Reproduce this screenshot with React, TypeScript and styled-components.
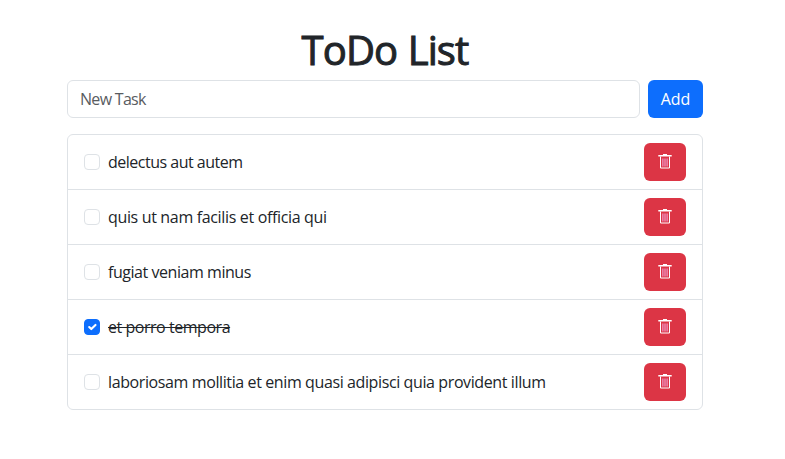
import React, { useState } from "react";
import styled, { createGlobalStyle } from "styled-components";

const GlobalStyle = createGlobalStyle`
  *, *::before, *::after { box-sizing: border-box; }
  body {
    margin: 0;
    background: #fff;
    color: #212529;
    font: 400 16px/1.5 "Segoe UI", "Open Sans", "Noto Sans", sans-serif;
  }
`;

const Container = styled.main`
  width: 636px;
  margin: 0 auto 0 67px;
  padding-top: 26px;
`;

const Title = styled.h1`
  margin: 0 0 6px;
  font-size: 40px;
  font-weight: 500;
  line-height: 48px;
  letter-spacing: -0.9px;
  word-spacing: 1px;
  -webkit-text-stroke: 1px currentColor;
  text-align: center;
  white-space: nowrap;
`;

const Form = styled.form`
  display: flex;
  gap: 8px;
  margin: 0 0 16px;
`;

const Input = styled.input`
  flex: 1;
  min-width: 0;
  height: 38px;
  padding: 6px 12px;
  border: 1px solid #dee2e6;
  border-radius: 6px;
  font: inherit;
  color: inherit;
  letter-spacing: -0.7px;
  &::placeholder { color: #595c5f; opacity: 1; }
`;

const Button = styled.button<{ $danger?: boolean }>`
  display: flex;
  align-items: center;
  justify-content: center;
  width: ${(p) => (p.$danger ? 42 : 55)}px;
  height: 38px;
  padding: 0;
  border: 0;
  border-radius: 6px;
  background: ${(p) => (p.$danger ? "#dc3545" : "#0d6efd")};
  color: #fff;
  font: inherit;
`;

const List = styled.ul`
  margin: 0;
  padding: 0;
  list-style: none;
  border: 1px solid #dee2e6;
  border-radius: 6px;
`;

const Item = styled.li`
  display: flex;
  align-items: center;
  height: 55px;
  padding: 0 16px;
  & + & { border-top: 1px solid #dee2e6; }
  &:first-child { height: 54px; }
`;

const Check = styled.input`
  appearance: none;
  flex: none;
  width: 16px;
  height: 16px;
  margin: 0 8px 0 0;
  border: 1px solid #dee2e6;
  border-radius: 4px;
  background: #fff center / contain no-repeat;
  &:checked {
    border-color: #0d6efd;
    background-color: #0d6efd;
    background-image: url("data:image/svg+xml,%3csvg xmlns='http://www.w3.org/2000/svg' viewBox='0 0 20 20'%3e%3cpath fill='none' stroke='%23fff' stroke-linecap='round' stroke-linejoin='round' stroke-width='3' d='m6 10 3 3 6-6'/%3e%3c/svg%3e");
  }
`;

const Label = styled.div<{ $done: boolean; $spacing: number }>`
  flex: 1;
  white-space: nowrap;
  letter-spacing: ${(p) => p.$spacing}px;
  text-decoration: ${(p) => (p.$done ? "line-through 1px" : "none")};
`;

const Trash = () => (
  <svg width="16" height="18" viewBox="0 0 16 18" fill="none" stroke="#fff">
    <path d="M6 1.5H10" />
    <path strokeWidth="1.5" d="M1.3 2.75H14.7" />
    <path d="M3.5 3.5V15H12.5V3.5" />
    <path stroke="#f4b0e6" d="M5.9 5.5V13.5M8 5.5V13.5M10.1 5.5V13.5" />
  </svg>
);

const initialTasks = [
  { text: "delectus aut autem", done: false, spacing: -0.5 },
  { text: "quis ut nam facilis et officia qui", done: false, spacing: -0.34 },
  { text: "fugiat veniam minus", done: false, spacing: -0.45 },
  { text: "et porro tempora", done: true, spacing: -0.46 },
  { text: "laboriosam mollitia et enim quasi adipisci quia provident illum", done: false, spacing: -0.39 },
];

export default function App() {
  const [tasks, setTasks] = useState(initialTasks);
  const toggle = (i: number) =>
    setTasks(tasks.map((t, n) => (n === i ? { ...t, done: !t.done } : t)));
  const remove = (i: number) => setTasks(tasks.filter((_, n) => n !== i));
  return (
    <>
      <GlobalStyle />
      <Container>
        <Title>ToDo List</Title>
        <Form onSubmit={(e) => e.preventDefault()}>
          <Input placeholder="New Task" />
          <Button type="submit">Add</Button>
        </Form>
        <List>
          {tasks.map((t, i) => (
            <Item key={t.text}>
              <Check type="checkbox" checked={t.done} onChange={() => toggle(i)} />
              <Label $done={t.done} $spacing={t.spacing}>{t.text}</Label>
              <Button $danger type="button" aria-label="Delete" onClick={() => remove(i)}>
                <Trash />
              </Button>
            </Item>
          ))}
        </List>
      </Container>
    </>
  );
}
